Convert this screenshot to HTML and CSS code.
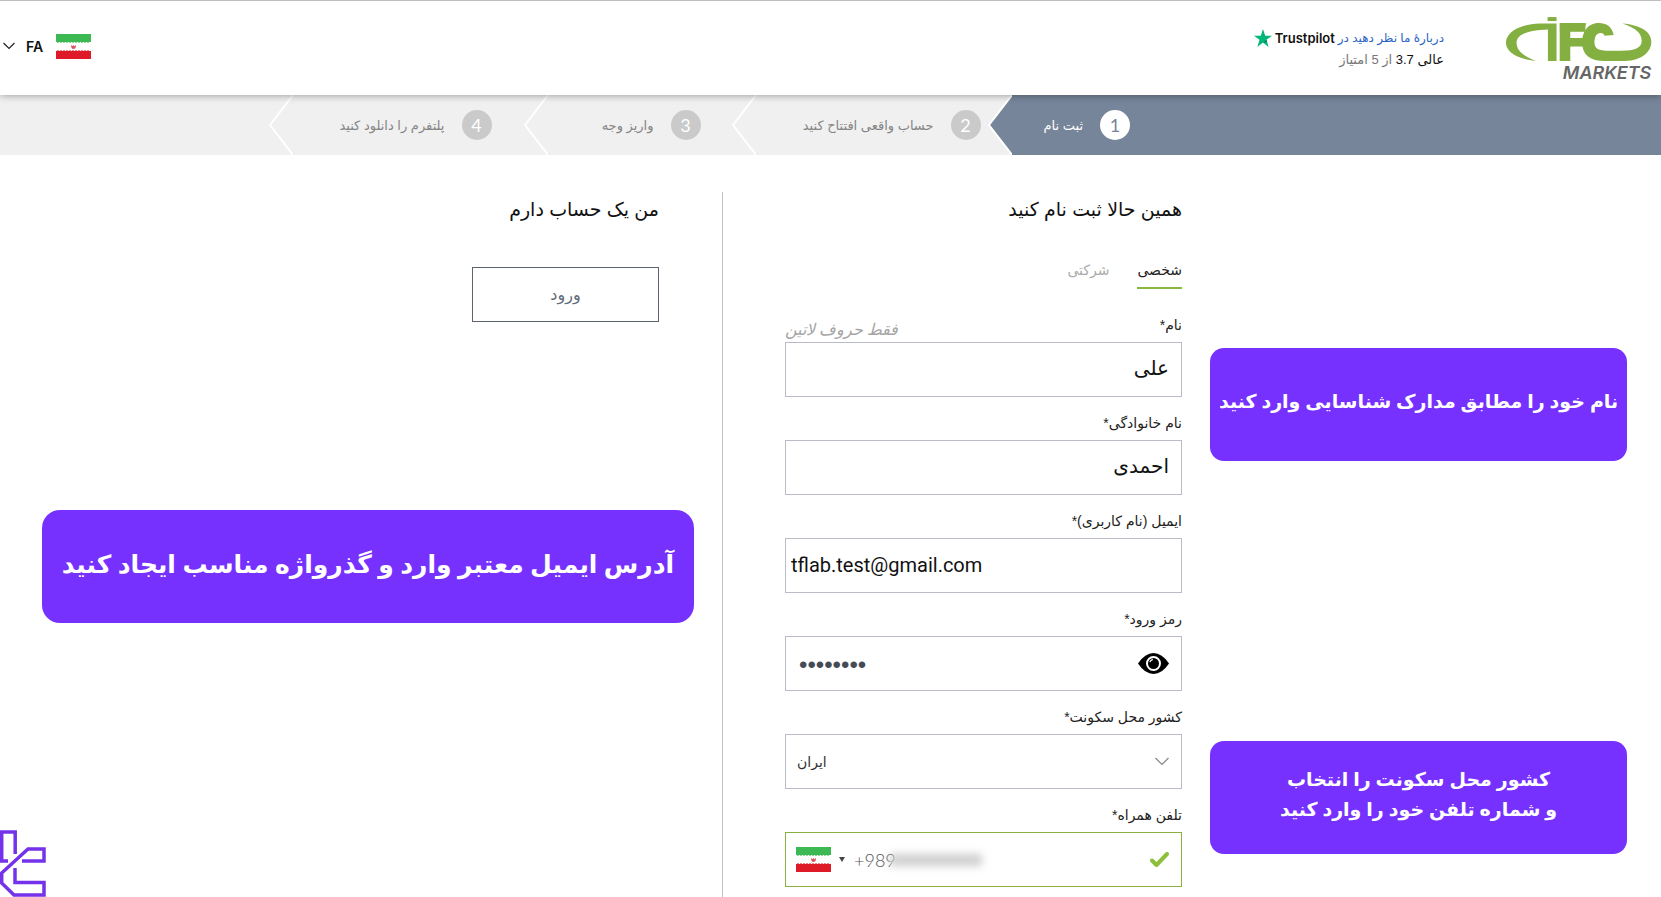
FILE: index.html
```html
<!DOCTYPE html>
<html lang="fa" dir="rtl">
<head>
<meta charset="utf-8">
<meta name="viewport" content="width=device-width, initial-scale=1">
<title>IFC Markets</title>
<link rel="stylesheet" href="styles.css">
</head>
<body>
<svg class="defs" width="0" height="0" aria-hidden="true">
  <symbol id="flag" viewBox="0 0 35 25">
    <rect width="35" height="25" fill="#fff"/>
    <rect width="35" height="8" fill="#3db954"/>
    <rect y="17" width="35" height="8" fill="#df1a28"/>
    <path d="M1 8.500h33" stroke="#8fd79c" stroke-dasharray="2 1"/>
    <path d="M1 16.500h33" stroke="#ee8088" stroke-dasharray="2 1"/>
    <path d="M15 11q0 4 2.500 4t2.500-4l-1.500 1.200-1-1.200-1 1.200z" fill="#e0525c"/>
  </symbol>
</svg>

<header class="header">
  <a class="logo" href="#" aria-label="IFC Markets">
    <svg viewBox="855 48 442 195" direction="ltr">
      <g fill="#84b041">
        <rect x="983" y="51" width="27" height="12"/>
        <path d="M1010 70H960C892 72 858 100 858 128C858 155 892 178 948 182C908 168 888 150 890 125C893 100 930 90 984 88V183H1010V70Z"/>
        <path d="M1020 70H1100L1086 92H1020Z"/>
        <text class="logo-letter" x="1014" y="180">F</text>
        <path d="M1182 105C1176 80 1160 69 1137 69C1102 69 1087 98 1087 128C1087 165 1112 183 1155 183H1215C1272 181 1295 152 1295 125C1295 95 1265 75 1208 70C1250 84 1266 100 1266 122C1266 144 1245 152 1205 152H1160C1135 152 1124 145 1124 127C1124 110 1130 99 1142 99C1150 99 1153 103 1154 107Z"/>
      </g>
      <text class="logo-word" x="1029" y="237">MARKETS</text>
    </svg>
  </a>
  <div class="rating">
    <div class="rating-line">
      <a href="#">دربارهٔ ما نظر دهید در</a>
      <span class="trustpilot" dir="ltr">
        <svg viewBox="0 0 18 18"><path fill="#00b67a" d="M9 0l2.200 6.700H18l-5.500 4.100L14.600 18 9 13.400 3.400 18l2.100-7.200L0 6.700h6.800z"/><path fill="#007a50" d="M12.500 10.800l.5 2.200L9 13.400z"/></svg>
        <span>Trustpilot</span>
      </span>
    </div>
    <div class="rating-score"><strong>عالی 3.7</strong> از 5 امتیاز</div>
  </div>
  <button class="language" type="button">
    <svg class="flag"><use href="#flag"/></svg>
    <span>FA</span>
    <svg class="caret" viewBox="0 0 12 8"><path d="M.5 1l5.500 5.500L11.500 1" fill="none" stroke="#222" stroke-width="1.200"/></svg>
  </button>
</header>

<ol class="steps">
  <li class="step step-active"><span class="num">1</span><span>ثبت نام</span>
    <svg class="arrow" viewBox="0 0 24 60"><path d="M24 0L1 30L24 60z" fill="#768599"/><path d="M24 0L1 30L24 60" fill="none" stroke="#fff" stroke-width="2"/></svg></li>
  <li class="step step-account"><span class="num">2</span><span>حساب واقعی افتتاح کنید</span>
    <svg class="arrow" viewBox="0 0 24 60"><path d="M24 0L1 30L24 60" fill="none" stroke="#fff" stroke-width="2"/></svg></li>
  <li class="step step-deposit"><span class="num">3</span><span>واریز وجه</span>
    <svg class="arrow" viewBox="0 0 24 60"><path d="M24 0L1 30L24 60" fill="none" stroke="#fff" stroke-width="2"/></svg></li>
  <li class="step step-platform"><span class="num">4</span><span>پلتفرم را دانلود کنید</span>
    <svg class="arrow" viewBox="0 0 24 60"><path d="M24 0L1 30L24 60" fill="none" stroke="#fff" stroke-width="2"/></svg></li>
</ol>

<main class="main">
  <form class="register">
    <h2 class="title">همین حالا ثبت نام کنید</h2>
    <div class="tabs">
      <button class="tab tab-on" type="button">شخصی</button>
      <button class="tab" type="button">شرکتی</button>
    </div>
    <div class="field">
      <div class="field-head"><label for="name">نام*</label><em class="hint">فقط حروف لاتین</em></div>
      <input class="box box-fa" id="name" type="text" value="علی">
    </div>
    <div class="field">
      <div class="field-head"><label for="family">نام خانوادگی*</label></div>
      <input class="box box-fa" id="family" type="text" value="احمدی">
    </div>
    <div class="field">
      <div class="field-head"><label for="email">ایمیل (نام کاربری)*</label></div>
      <input class="box box-email" id="email" type="email" dir="ltr" value="tflab.test@gmail.com">
    </div>
    <div class="field">
      <div class="field-head"><label for="pass">رمز ورود*</label></div>
      <div class="box group" dir="ltr">
        <input class="bare password" id="pass" type="password" value="password">
        <button class="eye" type="button" aria-label="نمایش رمز">
          <svg viewBox="0 0 31 21"><path d="M0 10.500Q7 0 15.500 0T31 10.500Q24 21 15.500 21T0 10.500z"/><circle cx="15.500" cy="10.500" r="6.500" fill="none" stroke="#fff" stroke-width="2"/><path d="M11.800 9.200q.7-2.300 3-2.900" fill="none" stroke="#fff" stroke-width="1.200"/></svg>
        </button>
      </div>
    </div>
    <div class="field">
      <div class="field-head"><label for="country">کشور محل سکونت*</label></div>
      <div class="box group" dir="ltr">
        <select class="bare country" id="country"><option>ایران</option></select>
        <svg class="select-caret" viewBox="0 0 14 9"><path d="M.5 1L7 7.500 13.500 1" fill="none" stroke="#888" stroke-width="1.200"/></svg>
      </div>
    </div>
    <div class="field">
      <div class="field-head"><label for="phone">تلفن همراه*</label></div>
      <div class="box group box-valid" dir="ltr">
        <svg class="flag"><use href="#flag"/></svg>
        <svg class="triangle" viewBox="0 0 6 5"><path d="M0 0h6L3 5z" fill="#444"/></svg>
        <input class="bare phone" id="phone" type="tel" value="+989">
        <span class="redacted"></span>
        <svg class="check" viewBox="0 0 19 16"><path d="M2 8.500l4.500 4.500L17 2" fill="none" stroke="#8ebf3c" stroke-width="4" stroke-linecap="round" stroke-linejoin="round"/></svg>
      </div>
    </div>
  </form>
  <div class="divider"></div>
  <section class="login">
    <h2 class="title">من یک حساب دارم</h2>
    <button class="login-button" type="button">ورود</button>
  </section>

  <p class="note note-name">نام خود را مطابق مدارک شناسایی وارد کنید</p>
  <p class="note note-phone">کشور محل سکونت را انتخاب<br>و شماره تلفن خود را وارد کنید</p>
  <p class="note note-email">آدرس ایمیل معتبر وارد و گذرواژه مناسب ایجاد کنید</p>
  <svg class="mark" viewBox="0 0 46 67"><path d="M0 31H8M1.700 31V2H15.200V24M22 31H44V19H28L1.700 43V53L14 65H44V52.500H15V38" fill="none" stroke="#7433ea" stroke-width="3.500"/></svg>
</main>
</body>
</html>
```

FILE: styles.css
```css
* { box-sizing: border-box; }

body {
  margin: 0;
  min-height: 100vh;
  display: flex;
  flex-direction: column;
  background: #fff;
  color: #222;
  font-family: "Liberation Sans", "DejaVu Sans", sans-serif;
  font-size: 14px;
}

button, input, select { font: inherit; color: inherit; }
button { border: 0; padding: 0; background: none; }
svg { display: block; }
.defs { position: absolute; }

.header {
  position: relative;
  z-index: 2;
  display: flex;
  align-items: center;
  min-height: 95px;
  padding: 0 9px 0 3px;
  border-top: 1px solid #bfbfbf;
  background: #fff;
  box-shadow: 0 0 8px rgba(0, 0, 0, .4);
}
.logo svg { width: 147px; height: 65px; overflow: visible; }
.logo-letter { font-family: Roboto, sans-serif; font-weight: 900; font-size: 150px; stroke: #84b041; stroke-width: 6px; }
.logo-word { font-family: Inter, sans-serif; font-weight: 600; font-style: italic; font-size: 54px; fill: #666; }

.rating { margin-right: 61px; line-height: 24px; }
.rating-line { display: flex; align-items: center; gap: 3px; font-size: 12px; }
.rating a { color: #2a63c4; text-decoration: none; }
.rating-score { color: #777; font-size: 13px; line-height: 20px; }
.rating-score strong { color: #111; font-weight: 400; }
.trustpilot { display: flex; align-items: center; gap: 3px; color: #111; }
.trustpilot svg { width: 18px; height: 18px; }
.trustpilot span { font-weight: 600; font-family: Inter, sans-serif; font-size: 13px; }

.language { display: flex; align-items: center; margin-right: auto; padding-bottom: 4px; color: #111; font-family: Inter, sans-serif; font-weight: 600; font-size: 14px; }
.language span { margin: 0 13px 0 11px; }
.flag { width: 35px; height: 25px; flex: none; }
.caret { width: 12px; height: 8px; }

.steps { display: flex; margin: 0; padding: 0; list-style: none; background: #f0f0f0; color: #858585; font-size: 13px; }
.step { position: relative; display: flex; align-items: center; gap: 17px; height: 60px; white-space: nowrap; }
.step-active { width: calc(50% - 180px); justify-content: flex-end; padding-left: 33px; background: #768599; color: #fff; }
.step-account { width: 256px; padding-right: 30px; }
.step-deposit { width: 208px; padding-right: 54px; }
.step-platform { width: 255px; padding-right: 55px; }
.num { display: grid; place-items: center; width: 30px; height: 30px; border-radius: 50%; background: #cacaca; color: #fff; font-family: Lato, sans-serif; font-size: 18px; }
.step-active .num { background: #fff; color: #768599; }
.arrow { position: absolute; left: -23px; top: 0; width: 24px; height: 60px; }

.main { position: relative; flex: 1; display: flex; justify-content: center; padding: 37px 7px 0 0; }
.register { flex: 0 1 397px; padding-bottom: 9px; }
.divider { width: 1px; margin: 0 62px 0 63px; background: #c4c4c4; }
.login { width: 187px; }
.title { margin: 0; color: #111; font-weight: 400; font-size: 19px; line-height: 36px; white-space: nowrap; }

.tabs { display: flex; gap: 28px; margin: 24px 0 10px; }
.tab { height: 37px; border-bottom: 2px solid transparent; color: #aaa; line-height: 24px; }
.tab-on { color: #222; border-color: #8bb73c; }

.field-head { display: flex; justify-content: space-between; align-items: flex-end; height: 43px; padding-bottom: 5px; line-height: 24px; }
.hint { font-family: "Noto Sans", "DejaVu Sans", sans-serif; font-size: 16px; line-height: 16px; color: #a5a5a5; }
.box { width: 100%; height: 55px; border: 1px solid #b9bcc6; border-radius: 0; background: #fff; color: #111; outline: 0; }
.box-fa { padding: 0 12px 4px; font-size: 20px; }
.box-email { padding: 0 5px 2px; font-family: Roboto, sans-serif; font-size: 20px; }
.group { display: flex; align-items: center; padding: 0 12px 0 11px; }
.bare { flex: 1; min-width: 0; height: 100%; border: 0; padding: 0; background: none; outline: 0; appearance: none; }
.password { padding: 2px 0 0 2px; color: #444b55; font-size: 24px; }
.eye svg { width: 31px; height: 21px; }
.country { color: #333; }
.select-caret { width: 14px; height: 9px; }
.box-valid { border-color: #8bb042; padding-left: 10px; }
.triangle { width: 6px; height: 5px; margin: 0 9px 0 8px; }
.phone { flex: 0 0 42px; color: #555; font-family: Lato, sans-serif; font-weight: 300; font-size: 18px; }
.redacted { width: 92px; height: 12px; background: #cecece; filter: blur(4px); margin-left: -6px; }
.check { width: 19px; height: 16px; margin-left: auto; }

.login-button { width: 100%; height: 55px; margin-top: 39px; border: 1px solid #5c6470; color: #5f6b7c; font-size: 16px; }

.note {
  position: absolute;
  display: flex;
  align-items: center;
  justify-content: center;
  margin: 0;
  height: 113px;
  padding-bottom: 8px;
  border-radius: 14px;
  background: #7631ff;
  color: #fff;
  font-family: "Noto Sans", "DejaVu Sans", sans-serif;
  font-weight: 700;
  font-size: 19px;
  line-height: 30px;
  text-align: center;
  white-space: nowrap;
}
.note-name, .note-phone { right: 34px; width: 417px; }
.note-name { top: 193px; }
.note-phone { top: 586px; }
.note-email { left: 42px; top: 355px; width: 652px; border-radius: 18px; font-size: 25px; }
.mark { position: absolute; left: 0; bottom: 0; width: 46px; height: 67px; }
```
